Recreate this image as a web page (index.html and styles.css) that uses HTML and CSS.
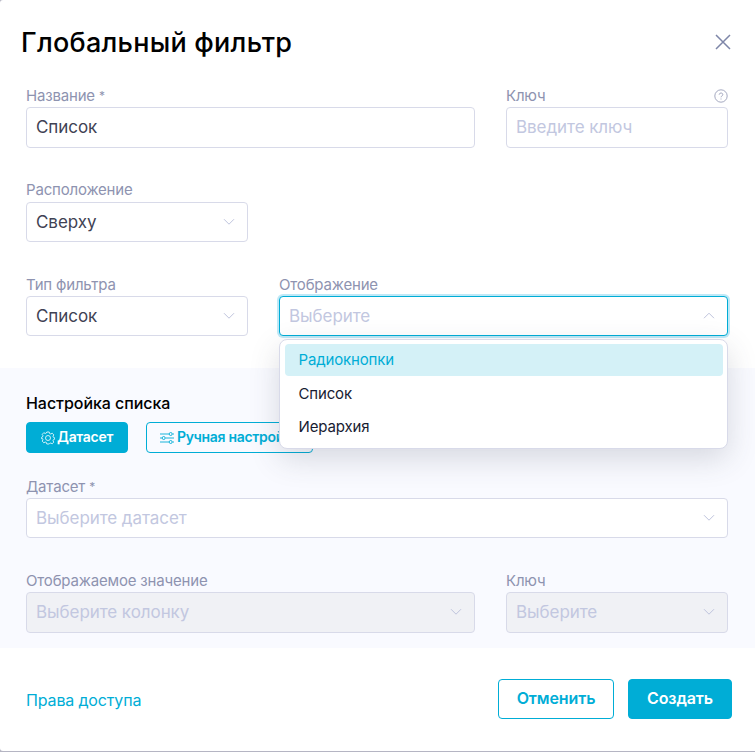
FILE: index.html
```html
<!DOCTYPE html>
<html lang="ru">
<head>
<meta charset="utf-8">
<title>Глобальный фильтр</title>
<link rel="stylesheet" href="styles.css">
</head>
<body>
<main class="modal">
  <header class="modal-header">
    <h1 class="title">Глобальный фильтр</h1>
    <svg class="close" viewBox="0 0 16 16"><path d="M1 1l14 14M15 1L1 15"/></svg>
  </header>

  <section class="general">
    <div class="row">
      <div class="field wide">
        <div class="label">Название<span class="star">*</span></div>
        <div class="control tall"><span>Список</span></div>
      </div>
      <div class="field narrow">
        <div class="label">Ключ<svg class="help" viewBox="0 0 14 14"><circle cx="7" cy="7" r="6.2"/><path d="M5.2 5.700c0-2.300 3.600-2.200 3.600-.1 0 1.400-1.800 1.300-1.800 2.700M7 9.500v1"/></svg></div>
        <div class="control tall placeholder"><span>Введите ключ</span></div>
      </div>
    </div>
    <div class="row">
      <div class="field narrow">
        <div class="label raised">Расположение</div>
        <div class="control"><span>Сверху</span><svg class="chevron" viewBox="0 0 12 8"><path d="M1 1.200l5 5 5-5"/></svg></div>
      </div>
    </div>
    <div class="row">
      <div class="field narrow">
        <div class="label">Тип фильтра</div>
        <div class="control"><span>Список</span><svg class="chevron" viewBox="0 0 12 8"><path d="M1 1.200l5 5 5-5"/></svg></div>
      </div>
      <div class="field wide">
        <div class="label">Отображение</div>
        <div class="control placeholder active"><span>Выберите</span><svg class="chevron" viewBox="0 0 12 8"><path d="M1 6.200l5-5 5 5"/></svg></div>
        <ul class="menu">
          <li class="option selected">Радиокнопки</li>
          <li class="option">Список</li>
          <li class="option">Иерархия</li>
        </ul>
      </div>
    </div>
  </section>

  <section class="settings">
    <h2 class="subtitle">Настройка списка</h2>
    <div class="toggles">
      <button class="toggle filled"><svg class="gear" viewBox="0 0 14 14"><path d="M5.800 1h2.400l.4 1.500 1.200.5 1.400-.8 1.600 1.700-.8 1.300.5 1.200 1.200.4v1.400l-1.200.4-.5 1.200.8 1.300-1.600 1.700-1.400-.8-1.200.5L8.200 13H5.800l-.4-1.500-1.200-.5-1.400.8-1.600-1.700.8-1.300-.5-1.200L.6 7.700V6.300l.9-.4.5-1.200-.8-1.300 1.600-1.700 1.400.8 1.200-.5z"/><circle cx="7" cy="7" r="2.500"/></svg>Датасет</button>
      <button class="toggle manual"><svg class="sliders" viewBox="0 0 14 12"><path d="M0 2h9M12.500 2H14M0 6h2M5.500 6H14M0 10h9M12.500 10H14"/><circle cx="10.700" cy="2" r="1.500"/><circle cx="3.700" cy="6" r="1.500"/><circle cx="10.700" cy="10" r="1.500"/></svg>Ручная настройка</button>
    </div>
    <div class="row">
      <div class="field full">
        <div class="label">Датасет<span class="star">*</span></div>
        <div class="control placeholder"><span>Выберите датасет</span><svg class="chevron" viewBox="0 0 12 8"><path d="M1 1.200l5 5 5-5"/></svg></div>
      </div>
    </div>
    <div class="row">
      <div class="field wide">
        <div class="label">Отображаемое значение</div>
        <div class="control tall placeholder disabled"><span>Выберите колонку</span><svg class="chevron" viewBox="0 0 12 8"><path d="M1 1.200l5 5 5-5"/></svg></div>
      </div>
      <div class="field narrow">
        <div class="label">Ключ</div>
        <div class="control tall placeholder disabled"><span>Выберите</span><svg class="chevron" viewBox="0 0 12 8"><path d="M1 1.200l5 5 5-5"/></svg></div>
      </div>
    </div>
  </section>

  <footer class="footer">
    <a class="link">Права доступа</a>
    <button class="btn cancel">Отменить</button>
    <button class="btn primary">Создать</button>
  </footer>
</main>
</body>
</html>
```

FILE: styles.css
```css
* { box-sizing: border-box; }
body {
  margin: 0;
  background: #b5b5c3;
  font-family: Inter, "Liberation Sans", sans-serif;
}
.modal {
  height: 751px;
  background: #fff;
  border-radius: 3px 0 0 3px;
  overflow: hidden;
}
svg { fill: none; stroke: currentColor; flex: none; }
.modal-header {
  height: 84px;
  padding: 0 24px 0 21px;
  display: flex;
  align-items: center;
  justify-content: space-between;
}
.title {
  margin: 0;
  padding-top: 1px;
  font-size: 27px;
  font-weight: 500;
  line-height: 32px;
  letter-spacing: .25px;
  color: #000;
}
.close { width: 16px; height: 16px; color: #7e86a8; stroke-width: 1.5; }
.general { height: 284px; padding: 0 27px 0 26px; }
.row {
  display: flex;
  gap: 31px;
  height: 94.500px;
}
.field { position: relative; }
.wide { width: 449px; }
.narrow { width: 222px; }
.full { width: 702px; }
.label {
  height: 23px;
  display: flex;
  align-items: center;
  font-size: 15px;
  line-height: 23px;
  letter-spacing: -.18px;
  color: #8e93b0;
}
.raised { padding-bottom: 2px; }
.star { margin-left: 4px; font-size: 12px; }
.help { width: 14px; height: 14px; margin-left: auto; stroke-width: .8; }
.control {
  height: 40px;
  padding: 0 12px 0 9px;
  display: flex;
  align-items: center;
  justify-content: space-between;
  border: 1px solid #d8dae9;
  border-radius: 4px;
  background: #fff;
  font-size: 17px;
  letter-spacing: -.06px;
  color: #3f4254;
}
.tall { height: 41px; padding-bottom: 1px; }
.placeholder { color: #c2c7e0; }
.disabled { background: #f0f1f5; }
.active {
  border-color: #00add6;
  box-shadow: 0 0 0 2px #bfe9f7;
}
.chevron { width: 12px; height: 8px; color: #bfc4dd; }
.menu {
  position: absolute;
  z-index: 2;
  top: 66px;
  left: 0;
  width: 449px;
  height: 110px;
  margin: 0;
  padding: 4px 4px 0 5px;
  list-style: none;
  background: #fff;
  border: 1px solid #d8dae9;
  border-radius: 8px;
  box-shadow: 0 10px 30px rgba(63, 66, 84, .18);
}
.option {
  height: 32px;
  margin-bottom: 1.500px;
  padding-left: 13.500px;
  border-radius: 4px;
  font-size: 15px;
  line-height: 32px;
  letter-spacing: -.15px;
  color: #181c32;
}
.selected { background: #d4f1f7; color: #00add6; }
.settings {
  height: 280px;
  padding: 23px 27px 0 26px;
  background: #f9faff;
}
.subtitle {
  margin: 0;
  height: 31px;
  font-size: 16px;
  font-weight: 500;
  line-height: 24px;
  letter-spacing: -.05px;
  color: #000;
}
.toggles { display: flex; gap: 18px; height: 53px; }
.settings .row { height: 94px; }
button { font-family: inherit; font-weight: 600; cursor: pointer; }
.toggle {
  height: 31px;
  padding: 0 13px 2px;
  display: flex;
  align-items: center;
  gap: 3px;
  border: 1px solid #00add6;
  border-radius: 4px;
  font-size: 14px;
  letter-spacing: -.3px;
  color: #00add6;
  background: transparent;
  white-space: nowrap;
}
.filled { width: 102px; padding-left: 14px; gap: 2px; color: #fff; background: #00add6; }
.manual { width: 167px; }
.gear { width: 14px; height: 14px; stroke-width: .8; position: relative; top: 1px; }
.sliders { width: 14px; height: 12px; stroke-width: .9; position: relative; top: 1px; }
.footer {
  height: 103px;
  padding: 0 23px 1px 26px;
  display: flex;
  align-items: center;
  gap: 14px;
}
.link { flex: 1; padding-top: 1px; font-size: 16px; letter-spacing: -.15px; color: #00add6; }
.btn {
  height: 40px;
  padding: 0 0 2px;
  border: 1px solid #00add6;
  border-radius: 4px;
  font-size: 16px;
  letter-spacing: -.1px;
}
.cancel { width: 116px; background: #fff; color: #00add6; }
.primary { width: 104px; background: #00add6; color: #fff; }
```
